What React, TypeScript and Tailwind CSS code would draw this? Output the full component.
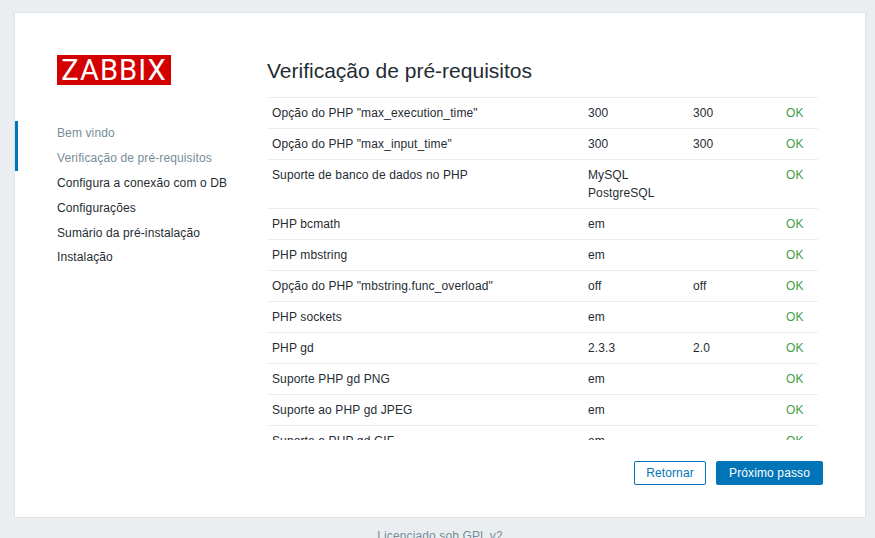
const STEPS = [
  { label: "Bem vindo", done: true },
  { label: "Verificação de pré-requisitos", done: true },
  { label: "Configura a conexão com o DB", done: false },
  { label: "Configurações", done: false },
  { label: "Sumário da pré-instalação", done: false },
  { label: "Instalação", done: false },
];

const ROWS = [
  { name: 'Opção do PHP "max_execution_time"', current: ["300"], required: "300" },
  { name: 'Opção do PHP "max_input_time"', current: ["300"], required: "300" },
  { name: "Suporte de banco de dados no PHP", current: ["MySQL", "PostgreSQL"], required: "" },
  { name: "PHP bcmath", current: ["em"], required: "" },
  { name: "PHP mbstring", current: ["em"], required: "" },
  { name: 'Opção do PHP "mbstring.func_overload"', current: ["off"], required: "off" },
  { name: "PHP sockets", current: ["em"], required: "" },
  { name: "PHP gd", current: ["2.3.3"], required: "2.0" },
  { name: "Suporte PHP gd PNG", current: ["em"], required: "" },
  { name: "Suporte ao PHP gd JPEG", current: ["em"], required: "" },
  { name: "Suporte a PHP gd GIF", current: ["em"], required: "" },
];

export default function App() {
  return (
    <div className="h-[538px] overflow-hidden bg-[#ebeef0] font-['Liberation_Sans',Arial,sans-serif] text-xs tracking-[0.12px] text-[#1f2c33]">
      <div className="ml-3.5 mr-[9px]">
        {/* Card */}
        <div className="mt-3 flex h-[506px] border border-[#dfe4e7] bg-white">
          {/* Sidebar */}
          <div className="w-[252px] shrink-0">
            <div className="ml-[42px] mt-[42px] flex h-[30px] w-[114px] items-center justify-center bg-[#d40000] font-['Roboto',sans-serif] text-[29px] font-normal leading-none tracking-[1.1px] text-white">
              ZABBIX
            </div>
            <div className="relative mt-[36px]">
              <div className="absolute left-0 top-0 h-[50px] w-[3px] bg-[#0275b8]" />
              <ul className="pl-[42px] pt-[0.4px]">
                {STEPS.map((step) => (
                  <li
                    key={step.label}
                    className={`h-[24.8px] leading-[25px] ${step.done ? "text-[#768d99]" : ""}`}
                  >
                    {step.label}
                  </li>
                ))}
              </ul>
            </div>
          </div>

          {/* Content */}
          <div className="flex-1">
            <h1 className="mt-[43px] h-[41px] text-[21px] leading-[30px] tracking-normal text-[#1f2c33]">
              Verificação de pré-requisitos
            </h1>
            <div className="h-[343px] w-[551px] overflow-hidden">
              {ROWS.map((row) => (
                <div key={row.name} className="flex border-t border-[#ebeef0] pb-[7px] pt-[8px] leading-[15px]">
                  <div className="w-[321px] pl-[5px]">{row.name}</div>
                  <div className="w-[105px]">
                    {row.current.map((value) => (
                      <div key={value} className="[&+div]:mt-[3px]">{value}</div>
                    ))}
                  </div>
                  <div className="w-[93px]">{row.required}</div>
                  <div className="text-[#429e47]">OK</div>
                </div>
              ))}
            </div>
            <div className="mr-[42px] mt-[21px] flex justify-end gap-2.5">
              <button className="h-6 w-[72px] rounded-[2px] border border-[#0275b8] bg-white text-[#0275b8]">
                Retornar
              </button>
              <button className="h-6 w-[107px] rounded-[2px] border border-[#0275b8] bg-[#0275b8] text-white">
                Próximo passo
              </button>
            </div>
          </div>
        </div>

        {/* Footer */}
        <div className="mt-[11px] text-center leading-[15px] text-[#768d99]">
          <span className="underline">Licenciado sob GPL v2</span>
        </div>
      </div>
    </div>
  );
}
